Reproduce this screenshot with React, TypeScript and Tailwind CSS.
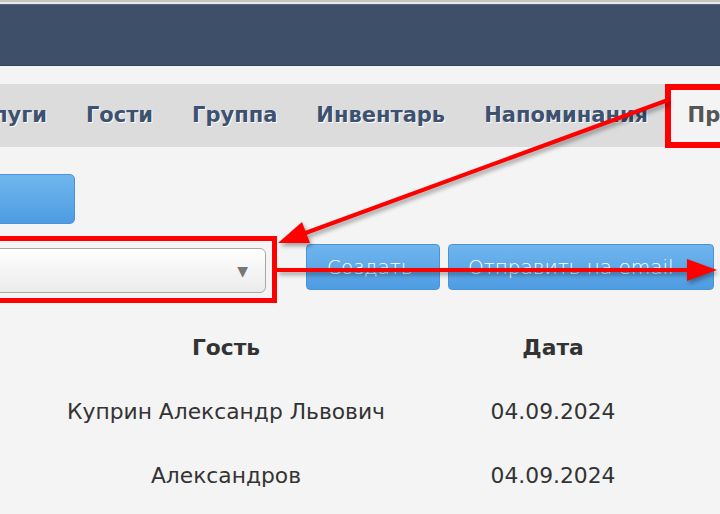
import React from "react";

const tabs = ["Услуги", "Гости", "Группа", "Инвентарь", "Напоминания"];

const rows = [
  { guest: "Куприн Александр Львович", date: "04.09.2024" },
  { guest: "Александров", date: "04.09.2024" },
];

const Arrows = () => (
  <svg
    className="absolute inset-0 pointer-events-none [filter:drop-shadow(2px_3px_2px_rgba(0,0,0,0.35))]"
    width={720}
    height={514}
  >
    {/* стрелка от вкладки к списку */}
    <line x1={668} y1={100} x2={300} y2={235} stroke="#ff0000" strokeWidth={4} />
    <polygon points="278,243 302,222 310,243" fill="#ff0000" />
    {/* стрелка вправо */}
    <line x1={277} y1={270} x2={692} y2={270} stroke="#ff0000" strokeWidth={4} />
    <polygon points="717,270 687,259 687,281" fill="#ff0000" />
  </svg>
);

export default function App() {
  return (
    <div className="relative w-[720px] h-[514px] overflow-hidden bg-[#f4f4f4] font-['DejaVu_Sans',Verdana,sans-serif]">
      {/* верхняя полоса */}
      <div className="h-[2px] bg-[#c4c4c4]" />
      <div className="h-[2px] bg-[#e8e8e8]" />
      <div className="h-[1px] bg-[#5b6573]" />
      <div className="h-[61px] bg-[#3d4f69] border-b border-[#34445a]" />

      {/* меню */}
      <div className="mt-[18px] h-[63px] bg-[#dcdcdc] flex items-stretch">
        <div className="flex items-stretch -ml-[56px]">
          {tabs.map((t) => (
            <div
              key={t}
              className="px-[19.5px] flex items-center text-[21px] font-bold text-[#3d5170] [text-shadow:1px_1px_0_#fff]"
            >
              {t}
            </div>
          ))}
          <div className="pl-[20px] pr-4 flex items-center bg-[#f4f4f4] text-[21px] font-bold text-[#555] whitespace-nowrap">
            Протоколы
          </div>
        </div>
      </div>

      {/* кнопка */}
      <div className="mt-[27px] -ml-[20px] w-[95px] h-[50px] rounded-[5px] bg-gradient-to-b from-[#70b7ee] to-[#4e9be2] border border-[#4b93d8]" />

      {/* выбор и кнопки */}
      <div className="mt-[20px] flex items-start">
        <div className="mt-[4px] -ml-[20px] w-[286px] h-[45px] rounded-[6px] border border-[#a8a8a8] bg-gradient-to-b from-white to-[#ebebeb] flex items-center justify-end pr-[17px]">
          <span className="text-[#777] text-[14px] leading-none">▼</span>
        </div>
        <button className="ml-[40px] w-[134px] h-[46px] rounded-[4px] bg-gradient-to-b from-[#6fb6ee] to-[#4f9ce2] border border-[#4b93d8] text-white text-[20px] font-light text-left pl-[20px]">
          Создать
        </button>
        <button className="ml-[8px] w-[266px] h-[46px] rounded-[4px] bg-gradient-to-b from-[#6fb6ee] to-[#4f9ce2] border border-[#4b93d8] text-white text-[20px] font-light text-left pl-[19px]">
          Отправить на email
        </button>
      </div>

      {/* таблица */}
      <div className="mt-[23px] grid grid-cols-[452px_202px] text-[21.8px] text-[#333]">
        <div className="h-[64px] flex items-center justify-center font-bold">Гость</div>
        <div className="h-[64px] flex items-center justify-center font-bold">Дата</div>
        {rows.map((r, i) => (
          <React.Fragment key={i}>
            <div className="h-[64px] flex items-center justify-center">{r.guest}</div>
            <div className="h-[64px] flex items-center justify-center">{r.date}</div>
          </React.Fragment>
        ))}
      </div>

      {/* выделения */}
      <div className="absolute left-[-10px] top-[236px] w-[287px] h-[67px] border-[5px] border-[#ff0000]" />
      <div className="absolute left-[665px] top-[84px] w-[70px] h-[64px] border-[6px] border-[#ff0000]" />
      <Arrows />
    </div>
  );
}
